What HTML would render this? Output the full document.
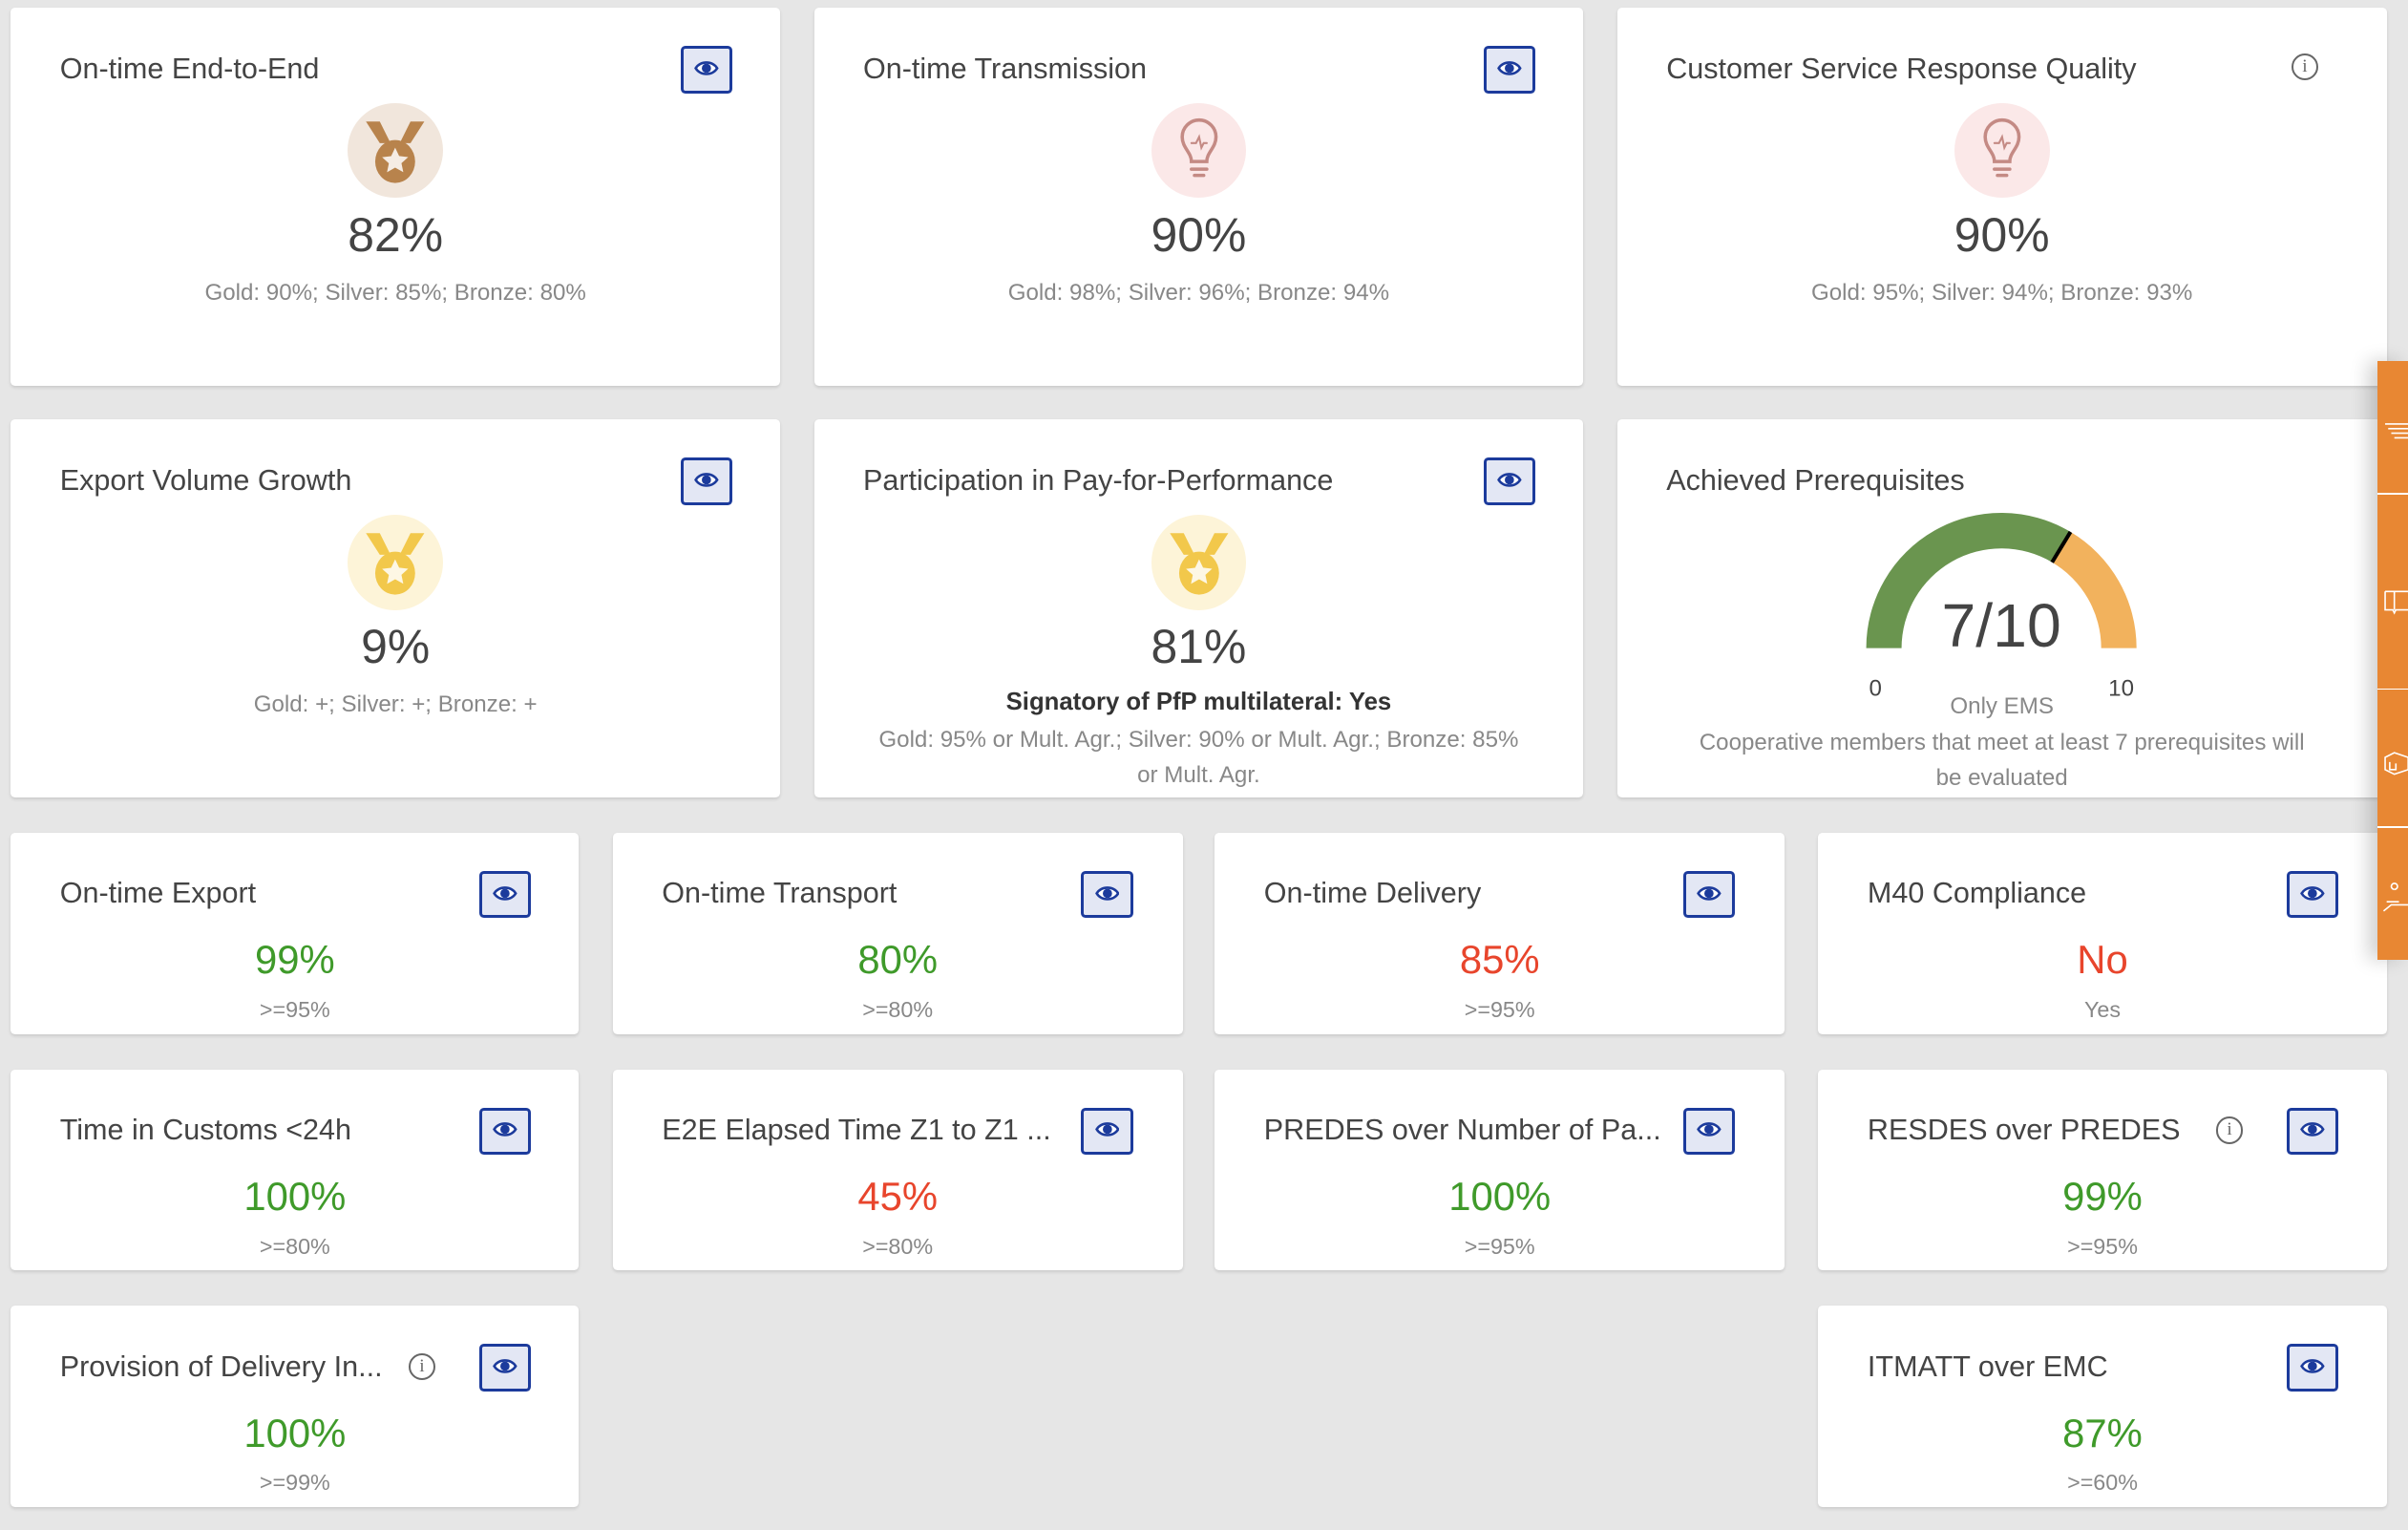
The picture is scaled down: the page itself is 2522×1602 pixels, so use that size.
<!DOCTYPE html>
<html><head><meta charset="utf-8"><style>
html,body{margin:0;padding:0;background:#e6e6e6;overflow:hidden}
body{width:2522px;height:1602px}
#w{zoom:1.6085;width:1568px;height:996px;position:relative;font-family:"Liberation Sans",sans-serif;color:#444}
.c{position:absolute;background:#fff;border-radius:3px;box-shadow:0 1px 2px rgba(0,0,0,.12)}
.t{position:absolute;left:32px;top:29px;font-size:19px;color:#444;white-space:nowrap}
.eye{position:absolute;width:30px;height:27px;background:#e3e7f4;border:2px solid #1c3b9c;border-radius:3px}
.eye svg{position:absolute;left:7px;top:6px}
.ic{position:absolute;width:62px;height:62px;border-radius:50%;left:50%;margin-left:-31px;top:62px}
.big{position:absolute;left:0;right:0;text-align:center;font-size:31px;color:#444;top:130px}
.sub{position:absolute;left:0;right:0;text-align:center;font-size:15px;color:#888;line-height:23px}
.v{position:absolute;left:0;right:0;text-align:center;font-size:26px;top:68px}
.th{position:absolute;left:0;right:0;text-align:center;font-size:14.5px;color:#888;top:107px}
.g{color:#3f9a2a}.r{color:#e8452c}
.info{position:absolute;width:15px;height:15px;border:1.3px solid #666;border-radius:50%;font-size:12px;line-height:15px;text-align:center;color:#666;font-family:"Liberation Serif",serif}
</style></head><body><div id="w">

<svg width="0" height="0" style="position:absolute"><defs>
<g id="eyeic"><path d="M1 6.5C4 1.5 12 1.5 15 6.5 12 11.5 4 11.5 1 6.5Z" fill="#fff" stroke="#1c3b9c" stroke-width="1.6"/><circle cx="8" cy="6.5" r="3" fill="#1c3b9c"/></g>
<g id="medal"><path d="M-19 -21h9l7 14h-7zM19 -21h-9l-7 14h7z" fill="currentColor"/><ellipse cx="0" cy="5" rx="13" ry="14" fill="currentColor"/><path d="M0 -4l2.6 5.4 5.9.7-4.4 4 1.2 5.8L0 9 -5.3 12l1.2-5.8-4.4-4 5.9-.7z" fill="#fff" opacity=".85"/></g>
<g id="bulb" fill="none" stroke="#c48a84" stroke-width="2.2" stroke-linecap="round"><path d="M-5 9C-5 3 -11 0 -11 -7A11 11 0 0 1 11 -7C11 0 5 3 5 9Z"/><path d="M-5 14h10M-3 18h6"/><path d="M-5 -3h3l2 -4 1.5 7 1.5-3h2" stroke-width="1.3"/></g>
</defs></svg>

<!-- Row 1 -->
<div class="c" style="left:7px;top:5px;width:501px;height:246px">
<div class="t">On-time End-to-End</div>
<div class="eye" style="left:436px;top:25px"><svg width="16" height="13"><use href="#eyeic"/></svg></div>
<div class="ic" style="background:#f1e6dc"><svg width="62" height="62" style="color:#b8834c"><g transform="translate(31,33)"><use href="#medal"/></g></svg></div>
<div class="big">82%</div><div class="sub" style="top:174px">Gold: 90%; Silver: 85%; Bronze: 80%</div>
</div>
<div class="c" style="left:530px;top:5px;width:501px;height:246px">
<div class="t">On-time Transmission</div>
<div class="eye" style="left:436px;top:25px"><svg width="16" height="13"><use href="#eyeic"/></svg></div>
<div class="ic" style="background:#fbe8e8"><svg width="62" height="62"><g transform="translate(31,29)"><use href="#bulb"/></g></svg></div>
<div class="big">90%</div><div class="sub" style="top:174px">Gold: 98%; Silver: 96%; Bronze: 94%</div>
</div>
<div class="c" style="left:1053px;top:5px;width:501px;height:246px">
<div class="t">Customer Service Response Quality</div>
<div class="info" style="left:439px;top:30px">i</div>
<div class="ic" style="background:#fbe8e8"><svg width="62" height="62"><g transform="translate(31,29)"><use href="#bulb"/></g></svg></div>
<div class="big">90%</div><div class="sub" style="top:174px">Gold: 95%; Silver: 94%; Bronze: 93%</div>
</div>

<!-- Row 2 -->
<div class="c" style="left:7px;top:273px;width:501px;height:246px">
<div class="t">Export Volume Growth</div>
<div class="eye" style="left:436px;top:25px"><svg width="16" height="13"><use href="#eyeic"/></svg></div>
<div class="ic" style="background:#fdf4d8"><svg width="62" height="62" style="color:#f2c84b"><g transform="translate(31,33)"><use href="#medal"/></g></svg></div>
<div class="big">9%</div><div class="sub" style="top:174px">Gold: +; Silver: +; Bronze: +</div>
</div>
<div class="c" style="left:530px;top:273px;width:501px;height:246px">
<div class="t">Participation in Pay-for-Performance</div>
<div class="eye" style="left:436px;top:25px"><svg width="16" height="13"><use href="#eyeic"/></svg></div>
<div class="ic" style="background:#fdf4d8"><svg width="62" height="62" style="color:#f2c84b"><g transform="translate(31,33)"><use href="#medal"/></g></svg></div>
<div class="big">81%</div>
<div class="sub" style="top:173px;color:#333;font-weight:bold;font-size:16px">Signatory of PfP multilateral: Yes</div>
<div class="sub" style="top:197px;padding:0 32px">Gold: 95% or Mult. Agr.; Silver: 90% or Mult. Agr.; Bronze: 85%<br>or Mult. Agr.</div>
</div>
<div class="c" style="left:1053px;top:273px;width:501px;height:246px">
<div class="t">Achieved Prerequisites</div>
<svg style="position:absolute;left:0;top:0" width="501" height="246">
<path d="M162 149A88 88 0 0 1 295 73.3L283 93.1A65 65 0 0 0 185 149Z" fill="#6a954f"/>
<path d="M295 73.3A88 88 0 0 1 338 149L315 149A65 65 0 0 0 283 93.1Z" fill="#f2b25d"/>
<path d="M295 73.3L283 93.1" stroke="#000" stroke-width="2.5"/>
<text x="250" y="148" text-anchor="middle" font-size="40" fill="#444" font-family="Liberation Sans">7/10</text>
<text x="168" y="180" text-anchor="middle" font-size="15" fill="#444" font-family="Liberation Sans">0</text>
<text x="328" y="180" text-anchor="middle" font-size="15" fill="#444" font-family="Liberation Sans">10</text>
</svg>
<div class="sub" style="top:175px">Only EMS</div>
<div class="sub" style="top:199px;padding:0 20px">Cooperative members that meet at least 7 prerequisites will<br>be evaluated</div>
</div>

<!-- Row 3 -->
<div class="c" style="left:7px;top:542px;width:370px;height:131px"><div class="t">On-time Export</div><div class="eye" style="left:305px;top:25px"><svg width="16" height="13"><use href="#eyeic"/></svg></div><div class="v g">99%</div><div class="th">&gt;=95%</div></div>
<div class="c" style="left:399px;top:542px;width:371px;height:131px"><div class="t">On-time Transport</div><div class="eye" style="left:305px;top:25px"><svg width="16" height="13"><use href="#eyeic"/></svg></div><div class="v g">80%</div><div class="th">&gt;=80%</div></div>
<div class="c" style="left:791px;top:542px;width:371px;height:131px"><div class="t">On-time Delivery</div><div class="eye" style="left:305px;top:25px"><svg width="16" height="13"><use href="#eyeic"/></svg></div><div class="v r">85%</div><div class="th">&gt;=95%</div></div>
<div class="c" style="left:1184px;top:542px;width:370px;height:131px"><div class="t">M40 Compliance</div><div class="eye" style="left:305px;top:25px"><svg width="16" height="13"><use href="#eyeic"/></svg></div><div class="v r">No</div><div class="th">Yes</div></div>

<!-- Row 4 -->
<div class="c" style="left:7px;top:696px;width:370px;height:131px"><div class="t">Time in Customs &lt;24h</div><div class="eye" style="left:305px;top:25px"><svg width="16" height="13"><use href="#eyeic"/></svg></div><div class="v g">100%</div><div class="th">&gt;=80%</div></div>
<div class="c" style="left:399px;top:696px;width:371px;height:131px"><div class="t">E2E Elapsed Time Z1 to Z1 ...</div><div class="eye" style="left:305px;top:25px"><svg width="16" height="13"><use href="#eyeic"/></svg></div><div class="v r">45%</div><div class="th">&gt;=80%</div></div>
<div class="c" style="left:791px;top:696px;width:371px;height:131px"><div class="t">PREDES over Number of Pa...</div><div class="eye" style="left:305px;top:25px"><svg width="16" height="13"><use href="#eyeic"/></svg></div><div class="v g">100%</div><div class="th">&gt;=95%</div></div>
<div class="c" style="left:1184px;top:696px;width:370px;height:131px"><div class="t">RESDES over PREDES</div><div class="info" style="left:259px;top:31px">i</div><div class="eye" style="left:305px;top:25px"><svg width="16" height="13"><use href="#eyeic"/></svg></div><div class="v g">99%</div><div class="th">&gt;=95%</div></div>

<!-- Row 5 -->
<div class="c" style="left:7px;top:850px;width:370px;height:131px"><div class="t">Provision of Delivery In...</div><div class="info" style="left:259px;top:31px">i</div><div class="eye" style="left:305px;top:25px"><svg width="16" height="13"><use href="#eyeic"/></svg></div><div class="v g">100%</div><div class="th">&gt;=99%</div></div>
<div class="c" style="left:1184px;top:850px;width:370px;height:131px"><div class="t">ITMATT over EMC</div><div class="eye" style="left:305px;top:25px"><svg width="16" height="13"><use href="#eyeic"/></svg></div><div class="v g">87%</div><div class="th">&gt;=60%</div></div>

<!-- sidebar -->
<div style="position:absolute;left:1548px;top:235px;width:20px;height:390px;background:#e88733;box-shadow:-6px 0 12px rgba(0,0,0,.18)">
<div style="position:absolute;left:0;right:0;top:86px;height:1px;background:#fff"></div>
<div style="position:absolute;left:0;right:0;top:213px;height:1px;background:#fff"></div>
<div style="position:absolute;left:0;right:0;top:303px;height:1px;background:#fff"></div>
<svg style="position:absolute;left:0;top:0" width="20" height="390" fill="none" stroke="#fff" stroke-width="1">
<path d="M5 41h15M7 44h13M9 47h11M11 50h9"/>
<path d="M5 150v12h5l1 2 1-2h8M5 150h6v12M11 150h9"/>
<path d="M5 258l6-3 9 3v8l-9 3-6-3zM8 261v5h4v-4"/>
<path d="M4 358l5-4h11M6 352h8M11 344a2 2 0 1 1 0.1 0"/>
</svg>
</div>

</div></body></html>
